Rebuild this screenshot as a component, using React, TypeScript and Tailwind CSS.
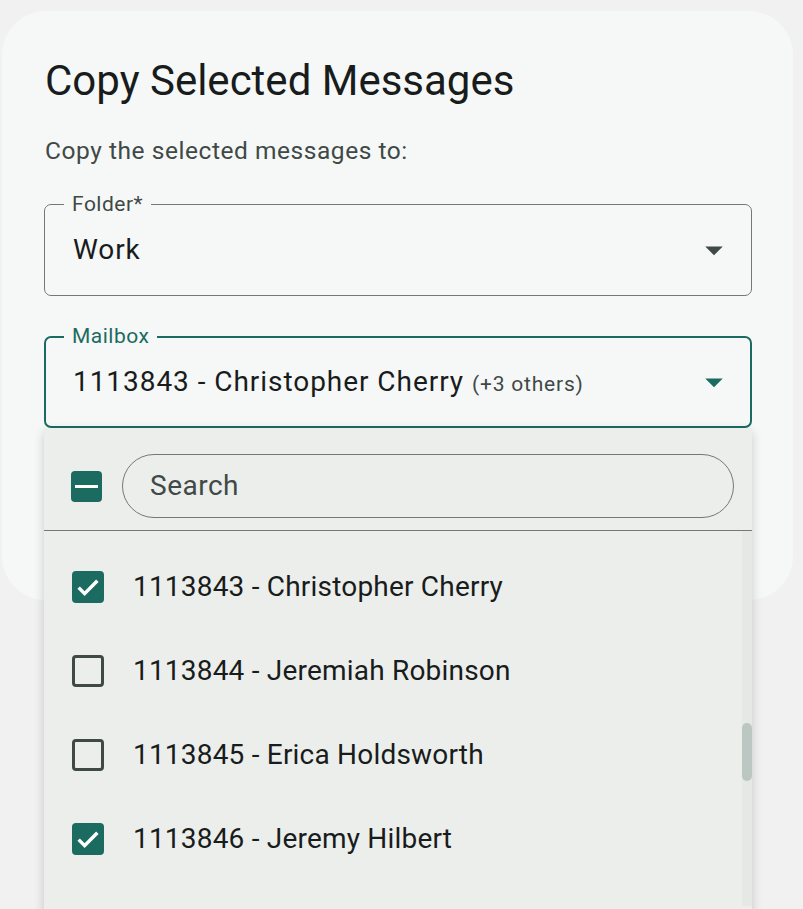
import { useState } from 'react';

const TEAL = '#1b6b61';

interface Mailbox {
  id: string;
  name: string;
  checked: boolean;
}

const MAILBOXES: Mailbox[] = [
  { id: '1113843', name: 'Christopher Cherry', checked: true },
  { id: '1113844', name: 'Jeremiah Robinson', checked: false },
  { id: '1113845', name: 'Erica Holdsworth', checked: false },
  { id: '1113846', name: 'Jeremy Hilbert', checked: true },
];

function ArrowDrop({ color }: { color: string }) {
  return (
    <svg viewBox="0 0 24 24" className="w-[42px] h-[42px] shrink-0" fill={color}>
      <path d="M7 10l5 5 5-5z" />
    </svg>
  );
}

function Checkbox({ checked }: { checked: boolean }) {
  if (checked) {
    return (
      <div className="w-[32px] h-[32px] rounded-[4px] bg-[#1b6b61] flex items-center justify-center shrink-0">
        <svg viewBox="0 0 24 24" className="w-[30px] h-[30px]" fill="none" stroke="white" strokeWidth="2.8">
          <path d="M4.5 12.5l4.8 4.8L19.5 7" />
        </svg>
      </div>
    );
  }
  return <div className="w-[32px] h-[32px] rounded-[4px] border-[3px] border-[#3f4946] shrink-0" />;
}

export default function App() {
  const [items] = useState(MAILBOXES);

  return (
    <div
      className="relative w-[803px] h-[909px] bg-[#f1f1f1] overflow-hidden pt-[11px] pl-[2px]"
      style={{ fontFamily: 'Roboto, "Noto Sans", sans-serif' }}
    >
      <div className="w-[791px] h-[589px] rounded-[44px] bg-[#f6f8f7] pl-[42px] pt-[55px] pr-[41px]">
        <h1 className="text-[42px] leading-[50px] text-[#191c1c] -mt-[10px] pl-[1px]">Copy Selected Messages</h1>
        <p className="mt-[29px] pl-[1px] text-[24.5px] leading-[32px] tracking-[0.55px] text-[#3f4946]">
          Copy the selected messages to:
        </p>

        <div className="relative mt-[37px] h-[92px] rounded-[7px] border border-[#73797a] flex items-center pl-[28px] pr-[16px]">
          <span className="absolute -top-[13px] left-[19px] px-[8px] bg-[#f6f8f7] text-[21px] leading-[24px] tracking-[0.5px] text-[#3f4946]">
            Folder*
          </span>
          <span className="flex-1 text-[28px] tracking-[0.9px] text-[#191c1c]">Work</span>
          <ArrowDrop color="#3f4946" />
        </div>

        <div className="relative mt-[40px] h-[92px] rounded-[7px] border-2 border-[#1b6b61] flex items-center pl-[27px] pr-[15px]">
          <span className="absolute -top-[14px] left-[18px] px-[8px] bg-[#f6f8f7] text-[21px] leading-[24px] tracking-[0.5px] text-[#1b6b61]">
            Mailbox
          </span>
          <span className="flex-1 text-[28px] tracking-[0.95px] text-[#191c1c] whitespace-nowrap">
            1113843 - Christopher Cherry{' '}
            <span className="text-[21px] tracking-[0.8px] text-[#3f4946]">(+3 others)</span>
          </span>
          <ArrowDrop color={TEAL} />
        </div>
      </div>

      {/* dropdown menu */}
      <div className="absolute left-[44px] top-[428px] w-[708px] h-[490px] bg-[#eceeeb] shadow-[0_4px_10px_rgba(0,0,0,0.18)] flex flex-col">
        <div className="flex items-center pl-[27px] pr-[18px] pt-[26px] pb-[12px]">
          <div className="w-[31px] h-[31px] rounded-[4px] bg-[#1b6b61] flex items-center justify-center shrink-0">
            <div className="w-[23px] h-[3px] bg-white" />
          </div>
          <div className="ml-[20px] flex-1 h-[64px] rounded-full border border-[#73797a] flex items-center pl-[27px]">
            <span className="text-[28px] tracking-[0.5px] text-[#3f4946]">Search</span>
          </div>
        </div>
        <div className="h-px bg-[#73797a]" />
        <div className="relative flex-1">
          <div className="pt-[14px]">
            {items.map(m => (
              <div key={m.id} className="h-[84px] flex items-center pl-[28px]">
                <Checkbox checked={m.checked} />
                <span className="ml-[29px] text-[28px] tracking-[0.2px] text-[#191c1c]">
                  {m.id} - {m.name}
                </span>
              </div>
            ))}
          </div>
          <div className="absolute right-0 top-0 bottom-[12px] w-[10px] bg-[#e5e8e5]">
            <div className="absolute left-0 right-0 top-[192px] h-[58px] rounded-full bg-[#bcc6c2]" />
          </div>
        </div>
      </div>
    </div>
  );
}
